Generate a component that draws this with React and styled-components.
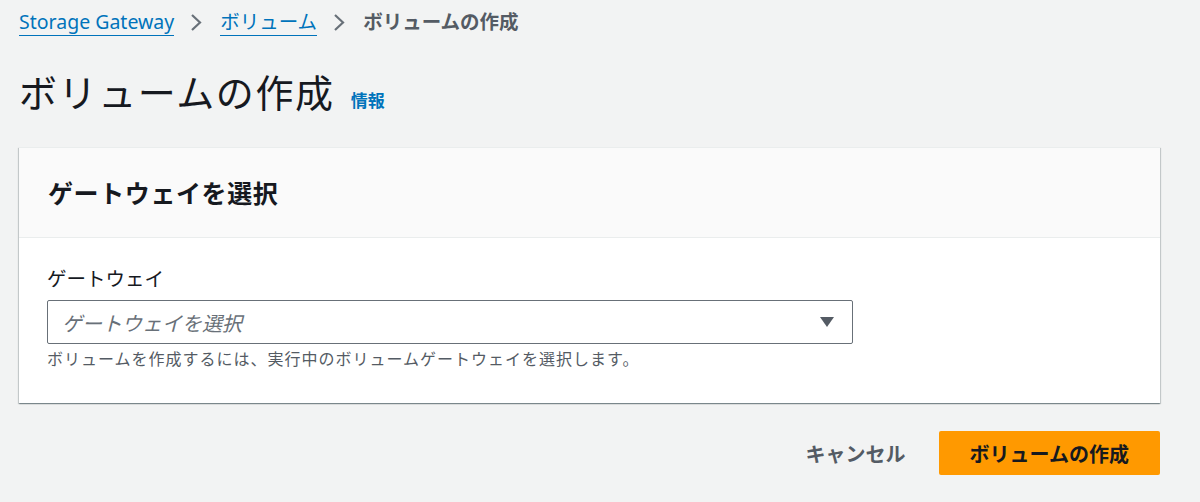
import React from 'react';
import styled, { createGlobalStyle } from 'styled-components';

const GlobalStyle = createGlobalStyle`
  html, body {
    margin: 0;
    padding: 0;
    background: #f2f3f3;
  }
  body {
    font-family: "Noto Sans", "Noto Sans CJK JP", sans-serif;
    color: #16191f;
  }
`;

const Page = styled.div`
  width: 1141px;
  padding: 0 40px 0 19px;
`;

const Breadcrumbs = styled.nav`
  display: flex;
  align-items: flex-start;
  height: 44px;
  padding-top: 10px;
  box-sizing: border-box;
  font-size: 19.5px;
  line-height: 24px;
`;

const Crumb = styled.a`
  display: inline-block;
  color: #0073bb;
  text-decoration: none;
  border-bottom: 1px solid #0073bb;
  padding-bottom: 1px;
`;

const CurrentCrumb = styled.span`
  color: #545b64;
  font-weight: 700;
`;

const Chevron = styled.svg`
  width: 14px;
  height: 24px;
  margin: 0 17px 0 15px;
  flex: none;
`;

const Header = styled.header`
  display: flex;
  align-items: baseline;
  gap: 16px;
  padding-top: 25px;
`;

const Title = styled.h1`
  margin: 0;
  font-size: 38px;
  line-height: 46px;
  font-weight: 400;
  letter-spacing: 1.6px;
  color: #16191f;
`;

const InfoLink = styled.a`
  color: #0073bb;
  font-size: 17px;
  font-weight: 700;
  text-decoration: none;
`;

const Card = styled.section`
  margin-top: 32px;
  background: #fff;
  box-shadow: 0 1px 1px 0 rgba(0, 28, 36, 0.3), 1px 1px 1px 0 rgba(0, 28, 36, 0.15),
    -1px 1px 1px 0 rgba(0, 28, 36, 0.15);
  border-top: 1px solid #eaeded;
`;

const CardHeader = styled.div`
  display: flex;
  align-items: center;
  height: 89px;
  padding: 0 29px;
  background: #fafafa;
  border-bottom: 1px solid #eaeded;
`;

const CardTitle = styled.h2`
  margin: 0;
  font-size: 25px;
  line-height: 30px;
  letter-spacing: 0.6px;
  font-weight: 700;
`;

const CardBody = styled.div`
  padding: 28px 28px 33px;
`;

const Label = styled.label`
  display: block;
  font-size: 19.5px;
  line-height: 26px;
  color: #16191f;
  margin-bottom: 8px;
`;

const SelectBox = styled.div`
  display: flex;
  align-items: center;
  justify-content: space-between;
  width: 806px;
  height: 44px;
  box-sizing: border-box;
  padding: 0 18px 0 14px;
  border: 1px solid #687078;
  border-radius: 2px;
  background: #fff;
`;

const Placeholder = styled.span`
  font-size: 20px;
  font-style: italic;
  color: #687078;
`;

const Caret = styled.svg`
  width: 14px;
  height: 10px;
`;

const Hint = styled.p`
  margin: 4px 0 0;
  font-size: 16px;
  line-height: 22px;
  letter-spacing: 1px;
  color: #545b64;
`;

const Actions = styled.div`
  display: flex;
  justify-content: flex-end;
  align-items: center;
  gap: 13px;
  margin-top: 28px;
`;

const Button = styled.button`
  height: 44px;
  border: none;
  border-radius: 2px;
  font-family: inherit;
  font-size: 20px;
  font-weight: 700;
  cursor: pointer;
  padding: 0 ${(p) => (p.$primary ? '31px' : '20px')};
  background: ${(p) => (p.$primary ? '#ff9900' : 'transparent')};
  color: ${(p) => (p.$primary ? '#16191f' : '#545b64')};
`;

const ChevronIcon = () => (
  <Chevron viewBox="0 0 14 24">
    <path d="M3 5 L11 12.5 L3 20" fill="none" stroke="#687078" strokeWidth="2.2" />
  </Chevron>
);

export default function App() {
  return (
    <>
      <GlobalStyle />
      <Page>
        <Breadcrumbs>
          <Crumb href="#">Storage Gateway</Crumb>
          <ChevronIcon />
          <Crumb href="#">ボリューム</Crumb>
          <ChevronIcon />
          <CurrentCrumb>ボリュームの作成</CurrentCrumb>
        </Breadcrumbs>
        <Header>
          <Title>ボリュームの作成</Title>
          <InfoLink href="#">情報</InfoLink>
        </Header>
        <Card>
          <CardHeader>
            <CardTitle>ゲートウェイを選択</CardTitle>
          </CardHeader>
          <CardBody>
            <Label>ゲートウェイ</Label>
            <SelectBox>
              <Placeholder>ゲートウェイを選択</Placeholder>
              <Caret viewBox="0 0 14 10">
                <path d="M0 0 H14 L7 10 Z" fill="#545b64" />
              </Caret>
            </SelectBox>
            <Hint>ボリュームを作成するには、実行中のボリュームゲートウェイを選択します。</Hint>
          </CardBody>
        </Card>
        <Actions>
          <Button>キャンセル</Button>
          <Button $primary>ボリュームの作成</Button>
        </Actions>
      </Page>
    </>
  );
}
